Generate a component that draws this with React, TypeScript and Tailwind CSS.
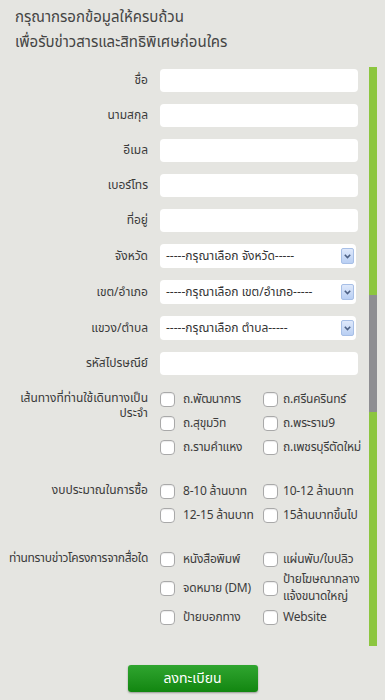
import * as React from "react";

const FONT = "font-['Tahoma','Noto_Sans_Thai','Noto_Sans','DejaVu_Sans',sans-serif]";

interface Option {
  label: React.ReactNode;
}

const Checkbox: React.FC<{ label: React.ReactNode; tight?: boolean }> = ({ label, tight }) => (
  <label className={`flex items-center ${tight ? "gap-[5px]" : "gap-[8px]"} cursor-pointer`}>
    <span className="w-[15px] h-[15px] shrink-0 rounded-[4px] border border-[#a9a9a9] bg-white shadow-[inset_0_1px_1px_rgba(0,0,0,0.08)]" />
    <span className="text-[12px] leading-[17px] text-[#3c3c3c] whitespace-nowrap tracking-[-0.2px]">{label}</span>
  </label>
);

const TextRow: React.FC<{ label: string }> = ({ label }) => (
  <div className="flex items-center h-[23px]">
    <div className="w-[160px] pr-3 text-right text-[12px] leading-[15px] text-[#3a3a3a] whitespace-nowrap">{label}</div>
    <input className="w-[198px] h-[23px] rounded-[4px] bg-white outline-none px-2 text-[12px]" />
  </div>
);

const SelectRow: React.FC<{ label: string; placeholder: string }> = ({ label, placeholder }) => (
  <div className="flex items-center h-[24px]">
    <div className="w-[160px] pr-3 text-right text-[12px] leading-[15px] text-[#3a3a3a] whitespace-nowrap">{label}</div>
    <div className="w-[196px] h-[24px] rounded-[4px] bg-white flex items-center justify-between pl-[6px] pr-[2px]">
      <span className="text-[12px] leading-[15px] text-[#333] whitespace-nowrap">{placeholder}</span>
      <span className="w-[13px] h-[16px] rounded-[2px] border border-[#a7bfe6] bg-gradient-to-b from-[#dfe9fb] to-[#b9cff3] flex items-center justify-center">
        <svg width="7" height="5" viewBox="0 0 7 5">
          <path d="M0.8 0.8 L3.5 3.6 L6.2 0.8" fill="none" stroke="#4d6185" strokeWidth="1.6" />
        </svg>
      </span>
    </div>
  </div>
);

const CheckGroup: React.FC<{
  label: React.ReactNode;
  rows: [Option, Option][];
  className?: string;
  labelClass?: string;
  rowClass?: string[];
}> = ({ label, rows, className = "", labelClass = "", rowClass = [] }) => (
  <div className={`flex ${className}`}>
    <div className={`w-[160px] shrink-0 pr-3 pt-[4px] text-right text-[12px] leading-[15px] text-[#3a3a3a] ${labelClass}`}>
      {label}
    </div>
    <div className="flex flex-col">
      {rows.map((row, i) => (
        <div key={i} className={`flex items-center ${rowClass[i] ?? "h-[24px]"}`}>
          <div className="w-[103px] shrink-0">
            <Checkbox label={row[0].label} />
          </div>
          <div>
            <Checkbox label={row[1].label} tight />
          </div>
        </div>
      ))}
    </div>
  </div>
);

export default function App() {
  return (
    <div className={`w-[385px] h-[700px] bg-[#e5e5e1] overflow-hidden ${FONT}`}>
      <div className="pl-[15px] pt-[5px] text-[15px] leading-[25px] text-[#444]">
        <div>กรุณากรอกข้อมูลให้ครบถ้วน</div>
        <div>เพื่อรับข่าวสารและสิทธิพิเศษก่อนใคร</div>
      </div>

      <div className="flex mt-[12px]">
        <form className="w-[358px] shrink-0 pt-[2px] pb-[17px] flex flex-col">
          <div className="flex flex-col gap-3">
            <TextRow label="ชื่อ" />
            <TextRow label="นามสกุล" />
            <TextRow label="อีเมล" />
            <TextRow label="เบอร์โทร" />
            <TextRow label="ที่อยู่" />
            <SelectRow label="จังหวัด" placeholder="-----กรุณาเลือก จังหวัด-----" />
            <SelectRow label="เขต/อำเภอ" placeholder="-----กรุณาเลือก เขต/อำเภอ-----" />
            <SelectRow label="แขวง/ตำบล" placeholder="-----กรุณาเลือก ตำบล-----" />
            <TextRow label="รหัสไปรษณีย์" />
          </div>

          <CheckGroup
            className="mt-[12px]"
            label="เส้นทางที่ท่านใช้เดินทางเป็นประจำ"
            rows={[
              [{ label: "ถ.พัฒนาการ" }, { label: "ถ.ศรีนครินทร์" }],
              [{ label: "ถ.สุขุมวิท" }, { label: "ถ.พระราม9" }],
              [{ label: "ถ.รามคำแหง" }, { label: "ถ.เพชรบุรีตัดใหม่" }],
            ]}
          />

          <CheckGroup
            className="mt-[20px]"
            label="งบประมาณในการซื้อ"
            rows={[
              [{ label: "8-10 ล้านบาท" }, { label: "10-12 ล้านบาท" }],
              [{ label: "12-15 ล้านบาท" }, { label: "15ล้านบาทขึ้นไป" }],
            ]}
          />

          <CheckGroup
            className="mt-[20px]"
            label="ท่านทราบข่าวโครงการจากสื่อใด"
            labelClass="whitespace-nowrap tracking-[-0.3px]"
            rowClass={["h-[24px]", "h-[34px]", "h-[24px]"]}
            rows={[
              [{ label: "หนังสือพิมพ์" }, { label: "แผ่นพับ/ใบปลิว" }],
              [
                { label: "จดหมาย (DM)" },
                {
                  label: (
                    <>
                      ป้ายโฆษณากลาง
                      <br />
                      แจ้งขนาดใหญ่
                    </>
                  ),
                },
              ],
              [{ label: "ป้ายบอกทาง" }, { label: "Website" }],
            ]}
          />
        </form>

        {/* scroll track */}
        <div className="ml-[11px] w-[8px] flex flex-col">
          <div className="h-[228px] bg-[#8cc63f]" />
          <div className="h-[117px] bg-[#8e8e92]" />
          <div className="flex-1 bg-[#8cc63f]" />
        </div>
      </div>

      <div className="flex justify-center mt-[19px]">
        <button className="w-[130px] h-[27px] rounded-[3px] bg-gradient-to-b from-[#2fa52f] to-[#11860f] shadow-[0_1px_2px_rgba(0,0,0,0.35)] text-white text-[14px] leading-none">
          ลงทะเบียน
        </button>
      </div>
    </div>
  );
}
